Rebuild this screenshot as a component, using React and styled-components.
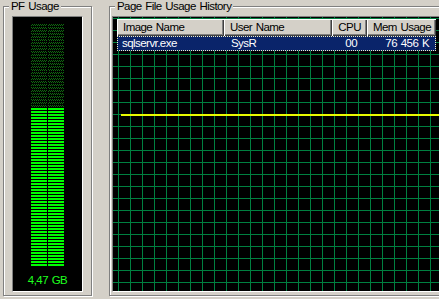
import React from 'react';
import styled, { createGlobalStyle } from 'styled-components';

const GlobalStyle = createGlobalStyle`
  html, body {
    margin: 0;
    padding: 0;
    background: #d4d0c8;
    overflow: hidden;
  }
`;

const processes = [
  { name: 'sqlservr.exe', user: 'SysR', cpu: '00', mem: '76 456 K' },
];

const App = () => {
  const usedGb = 4.47;
  const fill = 65.3;

  return (
    <>
      <GlobalStyle />
      <Window>
        <GroupBox $width={89}>
          <Caption>PF Usage</Caption>
          <Meter>
            <Bars>
              <BarColumn>
                <BarEmpty />
                <BarFill $fill={fill} />
              </BarColumn>
              <BarColumn>
                <BarEmpty />
                <BarFill $fill={fill} />
              </BarColumn>
            </Bars>
            <MeterLabel>{usedGb.toFixed(2).replace('.', ',')} GB</MeterLabel>
          </Meter>
        </GroupBox>

        <GroupBox $width={345}>
          <Caption>Page File Usage History</Caption>
          <Graph>
            <ChartLine width="100%" height="100%">
              <line x1="8" y1="98" x2="340" y2="98" stroke="#e8fa00" strokeWidth="2" />
            </ChartLine>
            <ListView>
              <HeaderRow>
                <HeaderCell>Image Name</HeaderCell>
                <HeaderCell>User Name</HeaderCell>
                <HeaderCell $right>CPU</HeaderCell>
                <HeaderCell $right $pad={5}>Mem Usage</HeaderCell>
              </HeaderRow>
              {processes.map((p) => (
                <Row key={p.name}>
                  <Cell $pad={5}>{p.name}</Cell>
                  <Cell $pad={7}>{p.user}</Cell>
                  <Cell $right $pad={10}>{p.cpu}</Cell>
                  <Cell $right $pad={7}>{p.mem}</Cell>
                </Row>
              ))}
            </ListView>
          </Graph>
        </GroupBox>
      </Window>
    </>
  );
};

const Window = styled.div`
  width: 439px;
  height: 299px;
  box-sizing: border-box;
  padding-left: 3px;
  display: flex;
  gap: 17px;
  overflow: hidden;
  font-family: "Liberation Sans", Arial, sans-serif;
  font-size: 11.5px;
  letter-spacing: -0.55px;
  word-spacing: 1px;
  color: #000;
`;

const GroupBox = styled.fieldset`
  flex: none;
  margin: 0;
  padding: 0;
  width: ${(p) => p.$width}px;
  height: 296px;
  box-sizing: border-box;
  border: 1px solid #808080;
  box-shadow: inset 1px 1px #fff, 1px 1px #fff;
  min-width: 0;
`;

const Caption = styled.legend`
  margin-left: 5px;
  padding: 0 2px;
  line-height: 13px;
  height: 13px;
  background: #d4d0c8;
`;

const Meter = styled.div`
  margin: 3px 0 0 8px;
  width: 71px;
  height: 276px;
  box-sizing: border-box;
  border: 1px solid;
  border-color: #808080 #fff #fff #808080;
  background: #000;
  padding-top: 7px;
  display: flex;
  flex-direction: column;
  align-items: center;
`;

const Bars = styled.div`
  display: flex;
  gap: 1px;
  height: 242px;
`;

const BarColumn = styled.div`
  width: 16px;
  display: flex;
  flex-direction: column;
`;

const BarEmpty = styled.div`
  flex: 1;
  background:
    repeating-linear-gradient(to bottom, transparent 0 2px, #000 2px 3px),
    repeating-conic-gradient(#0f6a0f 0 25%, #000 0 50%) 0 0 / 2px 2px;
`;

const BarFill = styled.div`
  height: ${(p) => p.$fill}%;
  background: repeating-linear-gradient(to bottom, #00ff00 0 2px, #000 2px 3px);
`;

const MeterLabel = styled.div`
  margin-top: 8px;
  line-height: 13px;
  color: #1eff1e;
`;

const Graph = styled.div`
  position: relative;
  margin: 3px 0 0 2px;
  width: 340px;
  height: 276px;
  box-sizing: border-box;
  border: 1px solid;
  border-color: #808080 #fff #fff #808080;
  background-color: #000;
  background-image:
    linear-gradient(to right, #008040 1px, transparent 1px),
    linear-gradient(to bottom, #008040 1px, transparent 1px);
  background-size: 12px 12px;
  background-position: 5px 1px;
  overflow: hidden;
`;

const ChartLine = styled.svg`
  position: absolute;
  inset: 0;
  display: block;
`;

const ListView = styled.div`
  position: absolute;
  left: 4px;
  top: 2px;
  width: 319px;
`;

const HeaderRow = styled.div`
  display: grid;
  grid-template-columns: 107px 108px 35px 69px;
  height: 17px;
`;

const HeaderCell = styled.div`
  background: #d4d0c8;
  box-shadow: inset 1px 1px #fff, inset -1px -1px #404040, inset -2px -2px #808080;
  line-height: 17px;
  padding: ${(p) => (p.$right ? `0 ${p.$pad || 6}px 0 0` : '0 0 0 6px')};
  text-align: ${(p) => (p.$right ? 'right' : 'left')};
  white-space: nowrap;
  overflow: hidden;
`;

const Row = styled.div`
  display: grid;
  grid-template-columns: 107px 108px 35px 69px;
  height: 15px;
  background: #0a246a;
  color: #fff;
  outline: 1px dotted #f4f0c0;
  outline-offset: -1px;
`;

const Cell = styled.div`
  line-height: 15px;
  padding: ${(p) => (p.$right ? `0 ${p.$pad}px 0 0` : `0 0 0 ${p.$pad}px`)};
  text-align: ${(p) => (p.$right ? 'right' : 'left')};
  white-space: nowrap;
  overflow: hidden;
`;

export default App;
